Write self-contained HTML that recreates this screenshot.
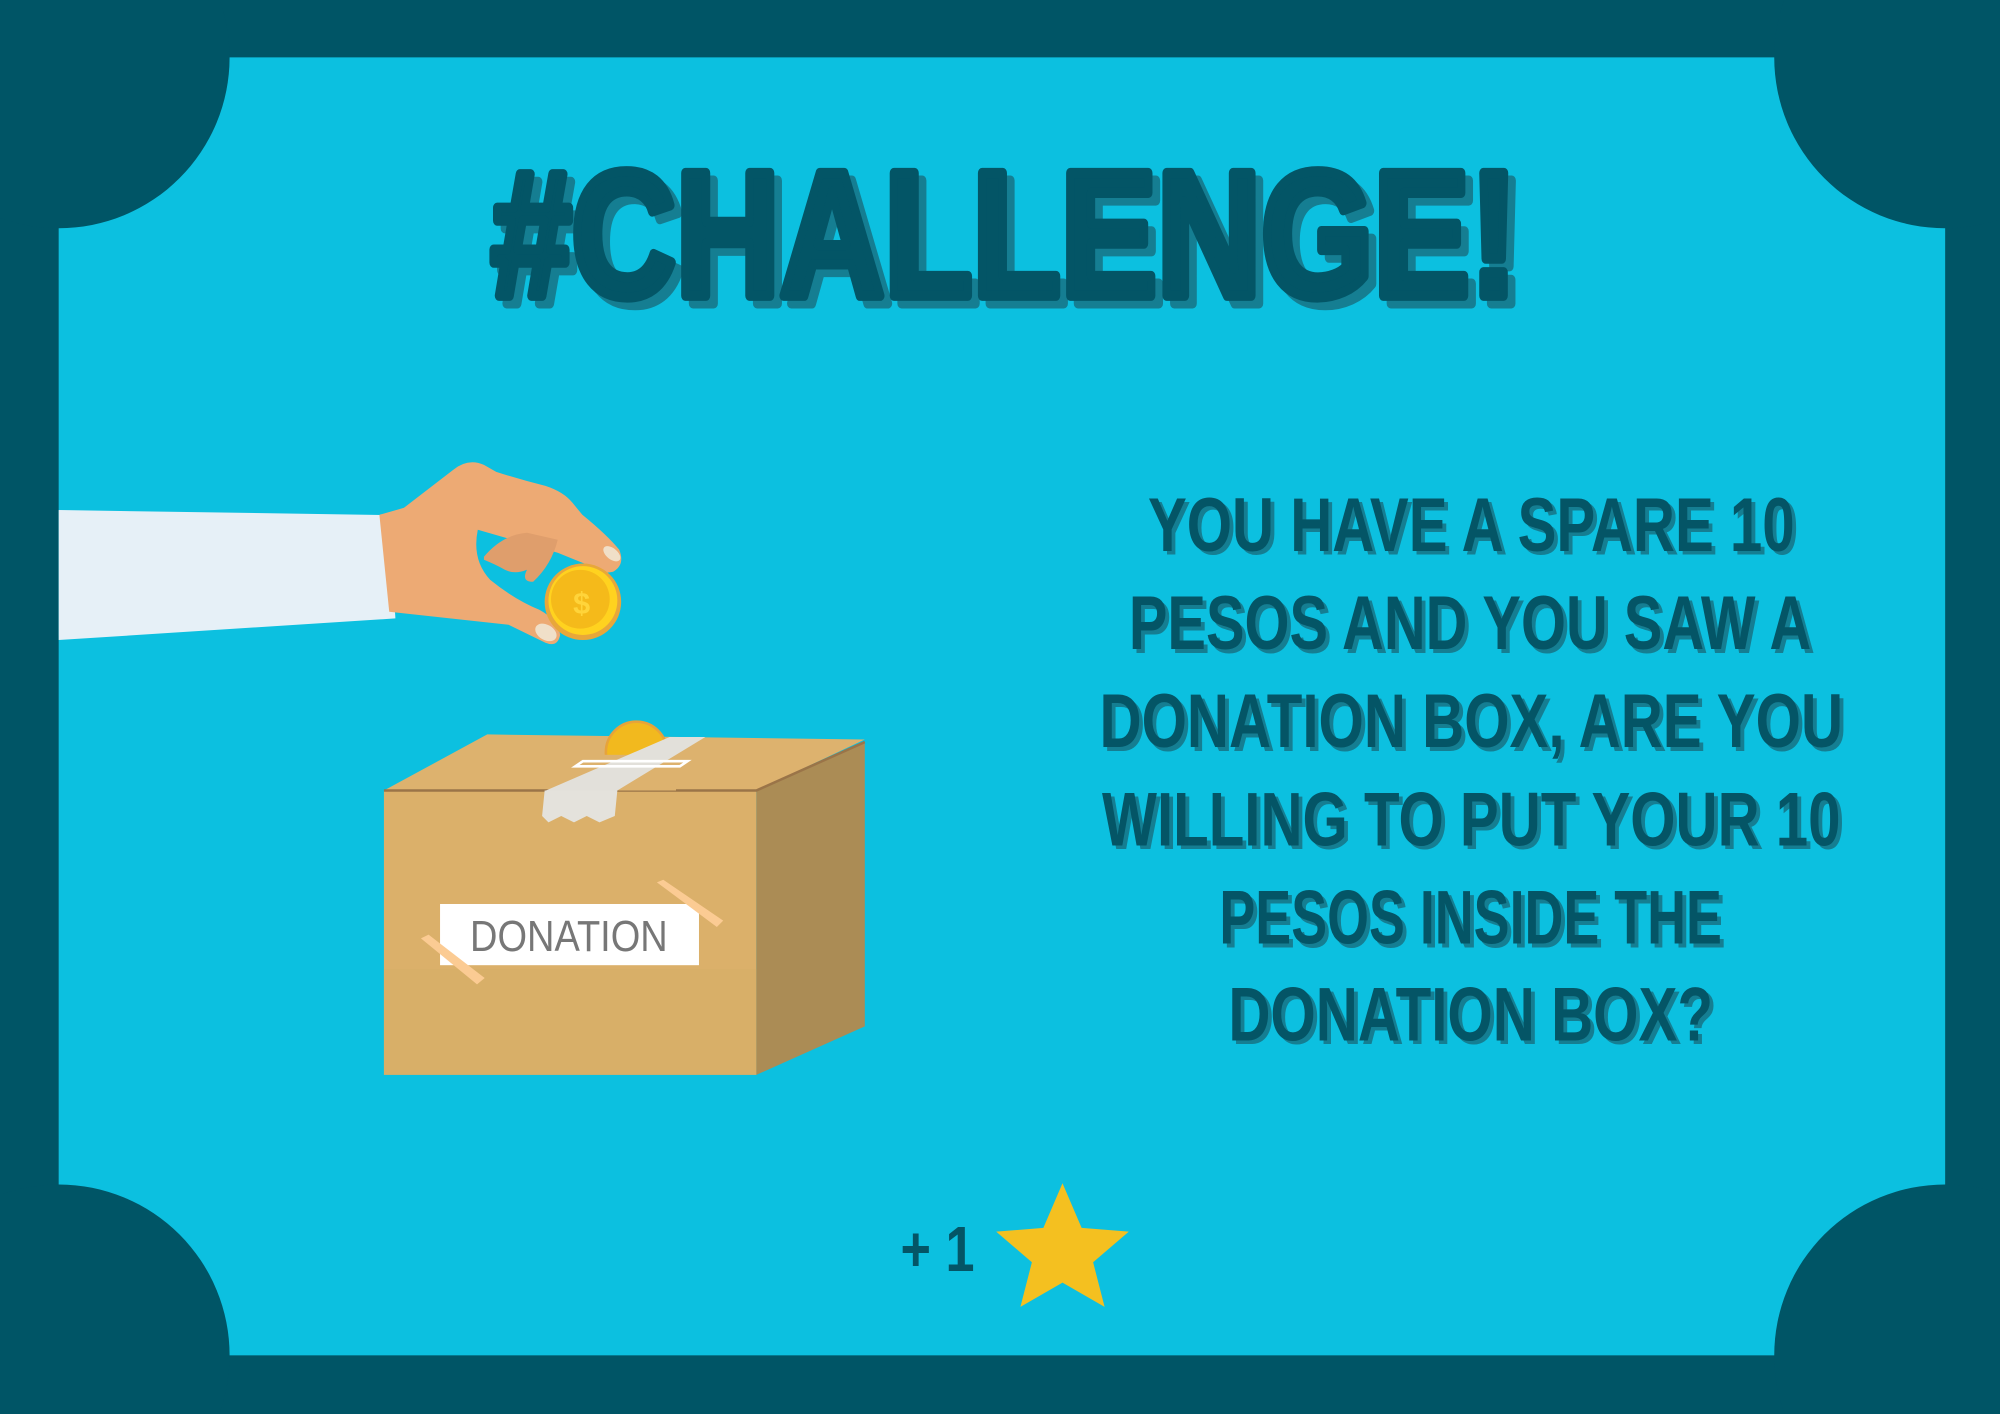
<!DOCTYPE html>
<html><head><meta charset="utf-8"><style>
html,body{margin:0;padding:0;width:2000px;height:1414px;overflow:hidden;background:#005566}
svg{display:block;position:absolute;left:0;top:0}
</style></head><body>
<svg width="2000" height="1414" viewBox="0 0 1568 1109" preserveAspectRatio="none" xmlns="http://www.w3.org/2000/svg">
<rect width="1568" height="1109" fill="#005566"/>
<rect x="46" y="45" width="1479" height="1018" fill="#0CC0E0"/>
<circle cx="46" cy="45" r="134" fill="#005566"/>
<circle cx="1525" cy="45" r="134" fill="#005566"/>
<circle cx="46" cy="1063" r="134" fill="#005566"/>
<circle cx="1525" cy="1063" r="134" fill="#005566"/>

<g font-family="Liberation Sans, sans-serif" font-weight="bold" font-size="140">
<text x="391" y="238" textLength="805" lengthAdjust="spacingAndGlyphs" fill="#157E92" stroke="#157E92" stroke-width="8" stroke-linejoin="round">#CHALLENGE!</text>
<text x="385" y="232" textLength="805" lengthAdjust="spacingAndGlyphs" fill="#035566" stroke="#035566" stroke-width="8" stroke-linejoin="round">#CHALLENGE!</text>
</g>

<g font-family="Liberation Sans Narrow, Liberation Sans, sans-serif" font-weight="bold" font-size="60">
<g fill="#157E92" transform="translate(3,3)">
<text x="900" y="432" textLength="507" lengthAdjust="spacingAndGlyphs">YOU HAVE A SPARE 10</text>
<text x="885" y="509" textLength="535" lengthAdjust="spacingAndGlyphs">PESOS AND YOU SAW A</text>
<text x="862" y="586" textLength="583" lengthAdjust="spacingAndGlyphs">DONATION BOX, ARE YOU</text>
<text x="864" y="663" textLength="579" lengthAdjust="spacingAndGlyphs">WILLING TO PUT YOUR 10</text>
<text x="956" y="740" textLength="394" lengthAdjust="spacingAndGlyphs">PESOS INSIDE THE</text>
<text x="963" y="816" textLength="380" lengthAdjust="spacingAndGlyphs">DONATION BOX?</text>
</g>
<g fill="#045566">
<text x="900" y="432" textLength="507" lengthAdjust="spacingAndGlyphs">YOU HAVE A SPARE 10</text>
<text x="885" y="509" textLength="535" lengthAdjust="spacingAndGlyphs">PESOS AND YOU SAW A</text>
<text x="862" y="586" textLength="583" lengthAdjust="spacingAndGlyphs">DONATION BOX, ARE YOU</text>
<text x="864" y="663" textLength="579" lengthAdjust="spacingAndGlyphs">WILLING TO PUT YOUR 10</text>
<text x="956" y="740" textLength="394" lengthAdjust="spacingAndGlyphs">PESOS INSIDE THE</text>
<text x="963" y="816" textLength="380" lengthAdjust="spacingAndGlyphs">DONATION BOX?</text>
</g>
<text x="706" y="997" font-size="50" textLength="58" lengthAdjust="spacingAndGlyphs" fill="#045566">+ 1</text>
</g>

<polygon fill="#F4C020" points="833,928 848,963 885,966 857,990 866,1025 833,1006 800,1025 809,990 781,966 818,963"/>

<!-- box -->
<polygon points="301,620 382,576 678,580 593,620" fill="#DDB26E"/>
<rect x="301" y="620" width="292" height="223" fill="#DBB06A"/>
<rect x="301" y="760" width="292" height="83" fill="#D6AF68" opacity="0.6"/>
<polygon points="593,620 678,582 678,805 593,843" fill="#AB8C55"/>
<polyline points="301,620 593,620 678,582" fill="none" stroke="#9A7448" stroke-width="2"/>
<circle cx="499" cy="590" r="24" fill="#F2B91E" stroke="#E7A33A" stroke-width="2"/>
<rect x="470" y="592" width="60" height="28" fill="#DDB26E"/>
<polygon points="428,620 484,620 553,578 525,578" fill="#E2E0DA"/>
<polygon points="427,620 484,620 482,640 470,645 460,640 450,645 440,640 430,645 425,640" fill="#E4E2DC"/>
<polygon points="457,597 539,597 533,601 451,601" fill="none" stroke="#fff" stroke-width="2"/>
<rect x="345" y="709" width="203" height="48" fill="#fff"/>
<text x="446" y="746" text-anchor="middle" font-family="Liberation Sans, sans-serif" font-size="34" fill="#777" textLength="155" lengthAdjust="spacingAndGlyphs">DONATION</text>
<polygon points="515,692 520,690 567,722 562,727" fill="#FBCB93"/>
<polygon points="330,736 336,733 380,767 374,772" fill="#FBCB93"/>

<!-- hand -->
<polygon points="46,400 305,404 310,485 46,502" fill="#E6F0F7"/>
<g transform="translate(300,0) scale(1.23,1) translate(-300,0)">
<g transform="scale(0.784)">
<path d="M380,515 L400,508 L440,470 Q452,458 465,465 L475,472 Q495,480 515,486 Q530,492 537,503 L545,515 Q565,535 575,550 Q580,565 570,572 Q560,575 555,568 L525,553 L460,530 Q455,560 470,580 Q490,600 510,610 Q525,620 527,635 Q525,648 515,643 L485,625 L388,612 Z" fill="#EDAA74"/>
<path d="M465,557 Q480,535 500,533 L525,540 Q520,565 505,582 Q495,582 500,570 Q490,575 482,570 Q475,565 465,560 Z" fill="#DF9E6C"/>
<ellipse cx="569" cy="554" rx="5" ry="9" fill="#F0DFC8" transform="rotate(-40 569 554)"/>
</g>
</g>
<circle cx="457" cy="472" r="30" fill="#E8A73A"/>
<circle cx="457" cy="471" r="27" fill="#FFD21F"/>
<circle cx="455" cy="470" r="23" fill="#F5BA1A"/>
<text x="456" y="481" text-anchor="middle" font-family="Liberation Sans, sans-serif" font-weight="bold" font-size="24" fill="#FFD43A">$</text>
<ellipse cx="428" cy="496" rx="9" ry="6" fill="#F0DFC8" transform="rotate(30 428 496)"/>
</svg>
</body></html>
